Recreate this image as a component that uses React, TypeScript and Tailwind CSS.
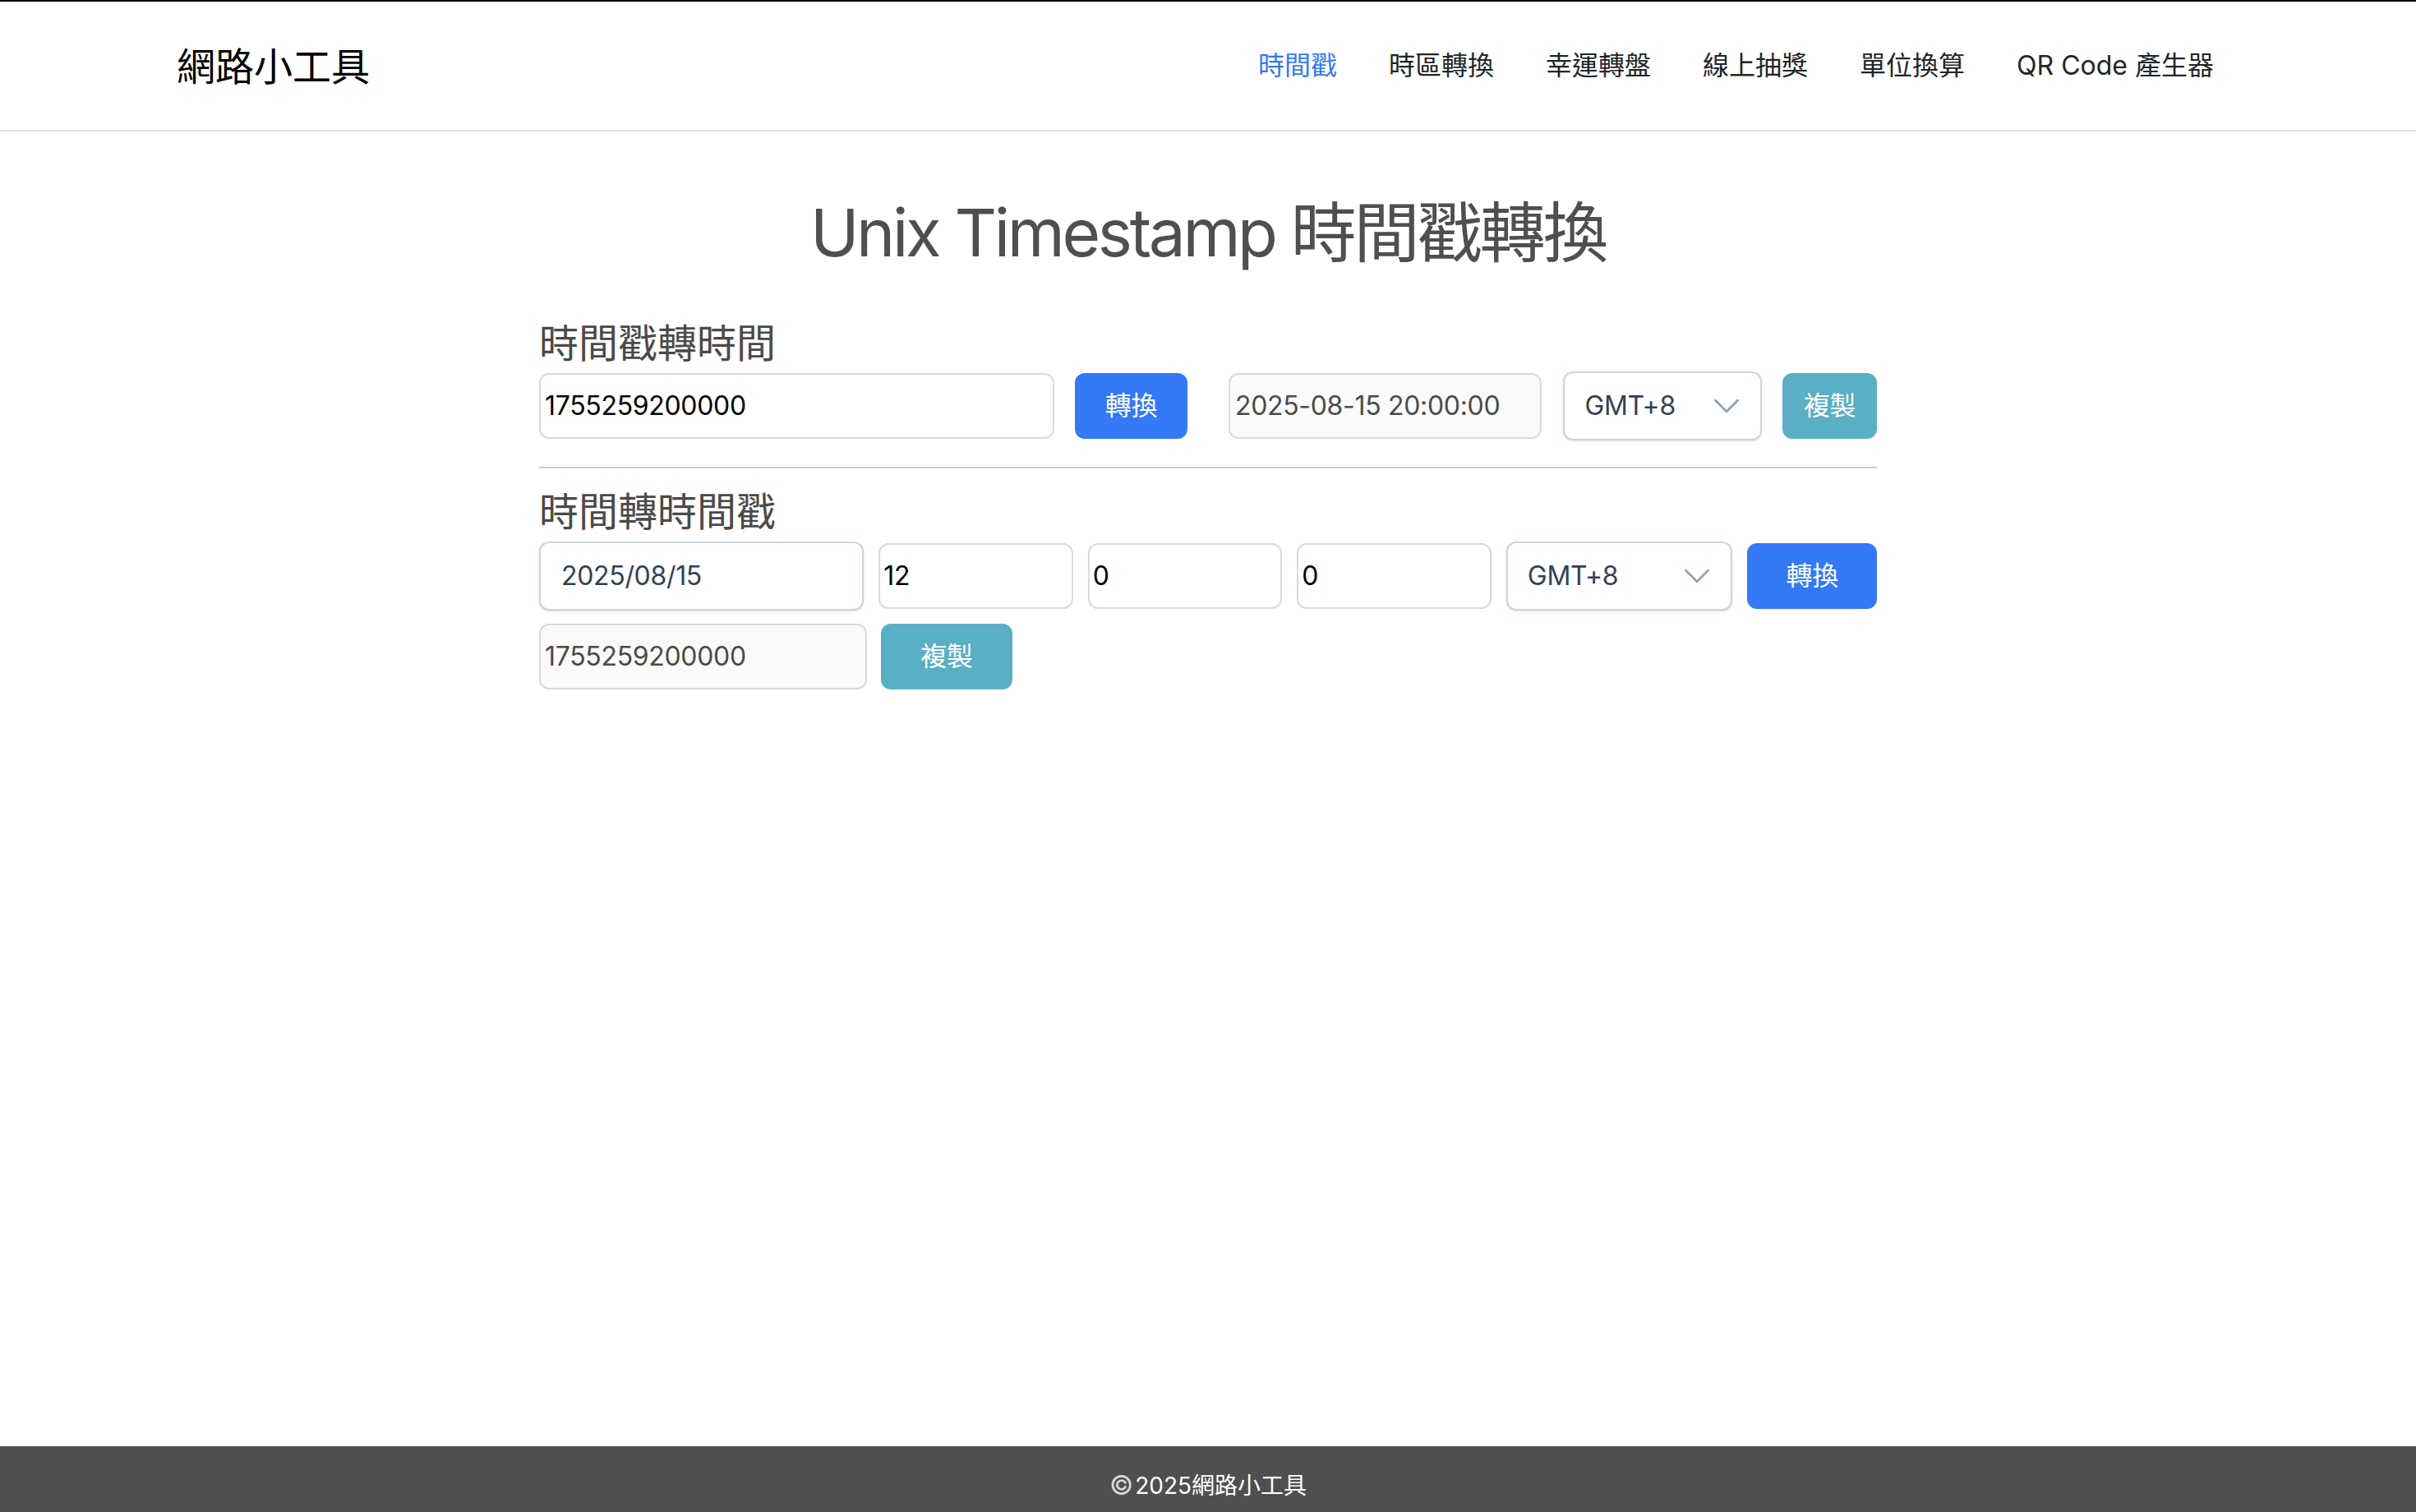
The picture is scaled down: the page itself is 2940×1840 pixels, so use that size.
import { ChevronDown } from "lucide-react";

const font = "font-['Inter','Noto_Sans_CJK_TC',sans-serif]";

const navItems = ["時間戳", "時區轉換", "幸運轉盤", "線上抽獎", "單位換算", "QR Code 產生器"];

function TzSelect({ className }: { className: string }) {
  return (
    <div
      className={`flex h-[84px] items-center justify-between rounded-[12px] border-2 border-[#cbd5e1] bg-white shadow-sm text-[32px] text-[#334155] ${className}`}
    >
      <span>GMT+8</span>
      <ChevronDown className="h-[54px] w-[54px] text-[#94a3b8]" strokeWidth={1.3} />
    </div>
  );
}

export default function App() {
  return (
    <div className={`flex min-h-screen flex-col bg-white ${font}`}>
      <div className="h-[2px] bg-black" />

      {/* Navbar */}
      <header className="flex h-[158px] items-center justify-between border-b-2 border-[#e3e5e8] pl-[215px] pr-[246px]">
        <div className="text-[47px] leading-none text-black">網路小工具</div>
        <nav className="flex gap-[63px] text-[32px] leading-none text-[#212529]">
          {navItems.map((item, i) => (
            <a key={item} className={i === 0 ? "text-[#3579f6]" : ""}>
              {item}
            </a>
          ))}
        </nav>
      </header>

      <main className="flex flex-col items-center">
        <h1 className="mt-[75px] text-[80px] leading-[1.2] tracking-[-0.042em] text-[#4f4f4f]">
          Unix Timestamp 時間戳轉換
        </h1>

        <div className="mt-[58px] w-[1628px]">
          {/* 時間戳轉時間 */}
          <h2 className="text-[48px] leading-[1.2] text-[#4a4a4a]">時間戳轉時間</h2>
          <div className="mt-[5px] flex items-center text-[32px] tracking-[-0.01em]">
            <div className="flex h-[80px] w-[628px] items-center rounded-[12px] border-2 border-[#d9d9d9] pl-[5px] text-black">
              1755259200000
            </div>
            <button className="ml-[25px] h-[80px] w-[137px] rounded-[12px] bg-[#3579f6] text-white">
              轉換
            </button>
            <div className="ml-[50px] flex h-[80px] w-[382px] items-center rounded-[12px] border-2 border-[#d9d9d9] bg-[#fafafa] pl-[6px] text-[#4a4a4a]">
              2025-08-15 20:00:00
            </div>
            <TzSelect className="ml-[26px] w-[242px] pl-[24px] pr-[14px]" />
            <button className="ml-[25px] h-[80px] w-[115px] rounded-[12px] bg-[#5bafc5] text-white">
              複製
            </button>
          </div>

          <div className="mt-[32px] h-[2px] bg-[#cccccc]" />

          {/* 時間轉時間戳 */}
          <h2 className="mt-[24px] text-[48px] leading-[1.2] text-[#4a4a4a]">時間轉時間戳</h2>
          <div className="mt-[8px] flex items-center gap-[18px] text-[32px] tracking-[-0.01em]">
            <div className="flex h-[84px] w-[396px] items-center rounded-[12px] border-2 border-[#cbd5e1] bg-white pl-[25px] text-[#334155] shadow-sm">
              2025/08/15
            </div>
            {["12", "0", "0"].map((v, i) => (
              <div
                key={i}
                className="flex h-[80px] w-[237px] items-center rounded-[12px] border-2 border-[#d9d9d9] pl-[4px] text-black"
              >
                {v}
              </div>
            ))}
            <TzSelect className="w-[276px] pl-[24px] pr-[14px]" />
            <button className="h-[80px] w-[158px] rounded-[12px] bg-[#3579f6] text-white">
              轉換
            </button>
          </div>
          <div className="mt-[16px] flex items-center gap-[17px] text-[32px] tracking-[-0.01em]">
            <div className="flex h-[80px] w-[399px] items-center rounded-[12px] border-2 border-[#d9d9d9] bg-[#fafafa] pl-[5px] text-[#4a4a4a]">
              1755259200000
            </div>
            <button className="h-[80px] w-[160px] rounded-[12px] bg-[#5bafc5] text-white">
              複製
            </button>
          </div>
        </div>
      </main>

      <footer className="mt-auto flex h-[80px] items-center justify-center bg-[#4f4f4f] pt-[16px] text-[28px] text-white">
        <span className="mr-[2px] text-[32px] leading-none text-[#d8d8d8]">©</span>2025網路小工具
      </footer>
    </div>
  );
}
